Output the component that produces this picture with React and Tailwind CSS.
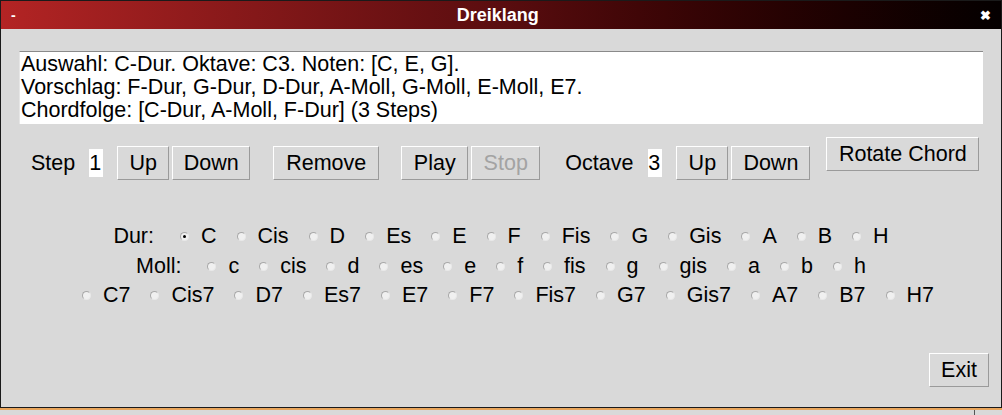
import React from 'react';

const dur = ['C', 'Cis', 'D', 'Es', 'E', 'F', 'Fis', 'G', 'Gis', 'A', 'B', 'H'];
const moll = ['c', 'cis', 'd', 'es', 'e', 'f', 'fis', 'g', 'gis', 'a', 'b', 'h'];
const sept = ['C7', 'Cis7', 'D7', 'Es7', 'E7', 'F7', 'Fis7', 'G7', 'Gis7', 'A7', 'B7', 'H7'];

function Btn({ children, w, disabled, className = '' }) {
    return (
        <div
            className={`h-[34px] flex items-center justify-center border border-t-white border-l-white border-r-[#9a9a9a] border-b-[#9a9a9a] bg-[#d9d9d9] ${disabled ? 'text-[#a3a3a3]' : 'text-black'} ${w} ${className}`}
        >
            {children}
        </div>
    );
}

function Radio({ label, checked }) {
    return (
        <div className="flex items-center ml-[20px] first:ml-0">
            <span className="w-[9px] h-[9px] rounded-full bg-[#f0f0f0] border border-t-[#a8a8a8] border-l-[#a8a8a8] border-r-[#e8e8e8] border-b-[#e8e8e8] flex items-center justify-center">
                {checked && <span className="w-[3px] h-[3px] rounded-full bg-black" />}
            </span>
            <span className="ml-[12px]">{label}</span>
        </div>
    );
}

export default function App() {
    return (
        <div className="w-[1002px] h-[415px] bg-[#d9d9d9] text-[21.5px] text-black overflow-hidden" style={{ fontFamily: '"Liberation Sans", Arial, sans-serif' }}>
            <div className="h-[408px] border border-[#1a1a1a] flex flex-col">
                {/* title bar */}
                <div className="h-[28px] bg-gradient-to-r from-[#b32424] via-[#5a0d0f] to-[#050000] flex items-center justify-between px-[10px] text-white">
                    <span className="text-[14px] font-bold leading-none">-</span>
                    <span className="text-[18px] font-bold">Dreiklang</span>
                    <span className="text-[13px] font-bold leading-none">✖</span>
                </div>

                <div className="flex-1 flex flex-col px-[18px]">
                    {/* info text */}
                    <div className="mt-[22px] h-[73px] bg-white border-t border-t-[#8a8a8a] border-l border-l-[#e6e6e6] px-[1px] leading-[23px] pt-[1px]">
                        <div>Auswahl: C-Dur. Oktave: C3. Noten: [C, E, G].</div>
                        <div>Vorschlag: F-Dur, G-Dur, D-Dur, A-Moll, G-Moll, E-Moll, E7.</div>
                        <div>Chordfolge: [C-Dur, A-Moll, F-Dur] (3 Steps)</div>
                    </div>

                    {/* controls */}
                    <div className="flex items-start mt-[13px]">
                        <div className="flex items-center mt-[9px] h-[34px]">
                            <span className="ml-[12px]">Step</span>
                            <span className="ml-[14px] bg-white w-[14px] h-[28px] flex items-center">1</span>
                            <Btn w="w-[52px]" className="ml-[14px]">Up</Btn>
                            <Btn w="w-[78px]" className="ml-[3px]">Down</Btn>
                            <Btn w="w-[106px]" className="ml-[23px]">Remove</Btn>
                            <Btn w="w-[67px]" className="ml-[22px]">Play</Btn>
                            <Btn w="w-[69px]" className="ml-[3px]" disabled>Stop</Btn>
                            <span className="ml-[25px]">Octave</span>
                            <span className="ml-[15px] bg-white w-[14px] h-[28px] flex items-center">3</span>
                            <Btn w="w-[52px]" className="ml-[14px]">Up</Btn>
                            <Btn w="w-[79px]" className="ml-[3px]">Down</Btn>
                        </div>
                        <Btn w="w-[153px]" className="ml-[16px]">Rotate Chord</Btn>
                    </div>

                    {/* chord radios */}
                    <div className="flex flex-col items-center mt-[42px] leading-[29.5px]">
                        <div className="flex items-center">
                            <span className="mr-[6px]">Dur:</span>
                            {dur.map((n, i) => <Radio key={n} label={n} checked={i === 0} />)}
                        </div>
                        <div className="flex items-center">
                            <span className="mr-[6px]">Moll:</span>
                            {moll.map(n => <Radio key={n} label={n} />)}
                        </div>
                        <div className="flex items-center pl-[14px]">
                            {sept.map(n => <Radio key={n} label={n} />)}
                        </div>
                    </div>

                    <div className="flex-1" />
                    <div className="flex justify-end mb-[20px] mr-[-6px]">
                        <Btn w="w-[60px]">Exit</Btn>
                    </div>
                </div>
            </div>
            <div className="h-[7px] border-t-2 border-t-[#e8a55c] flex">
                <div className="w-[975px] border-r border-r-[#555]" />
            </div>
        </div>
    );
}
